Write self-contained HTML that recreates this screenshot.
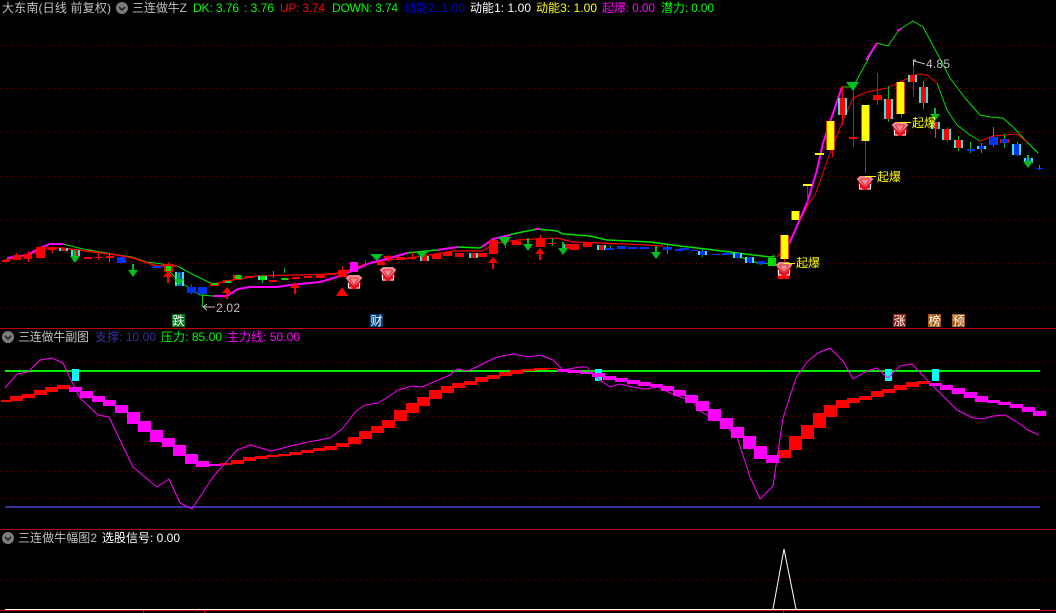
<!DOCTYPE html>
<html><head><meta charset="utf-8"><style>
html,body{margin:0;padding:0;background:#000;width:1056px;height:613px;overflow:hidden}
svg{display:block}
text{font-family:"Liberation Sans","WenQuanYi Zen Hei","Noto Sans CJK SC",sans-serif;font-size:12px}
.d{stroke:#780000;stroke-width:1;stroke-dasharray:1 5;fill:none;shape-rendering:crispEdges}
.c{shape-rendering:crispEdges}
.l{fill:none;stroke-linejoin:round}
</style></head><body>
<svg width="1056" height="613" viewBox="0 0 1056 613" xmlns="http://www.w3.org/2000/svg">
<defs>
<g id="ga"><path d="M-1 0h2v6h4l-5 7-5-7h4z" fill="#00c020"/></g>
<g id="ra"><path d="M-1 12h2v-6h4l-5-6-5 6h4z" fill="#f00"/></g>
<g id="gem">
<path d="M-6.500 -3H6.500V3Q6.500 6.500 3 7H-3Q-6.500 6.500 -6.500 3z" fill="#e8101c"/>
<path d="M-8.500 -4L-5 -7H5L8.500 -4L0 4z" fill="#f08a90"/>
<path d="M-5 -4L0 3L5 -4M-4 -4H4" fill="none" stroke="#d83040"/>
<path d="M-5.500 1V6H-2.500M5.500 1V6H2.500" fill="none" stroke="#fff"/>
</g>
<g id="ic"><circle r="6" fill="#7c7c7c"/><path d="M-3-1L0 2L3-1" fill="none" stroke="#222" stroke-width="1.6"/></g>
</defs>
<rect width="1056" height="613" fill="#000"/>

<!-- grid -->
<path class="d" d="M0 45.500H1056M0 88.500H1056M0 132.500H1056M0 176.500H1056M0 219.500H1056M0 263.500H1056M0 307.500H1056M0 362.500H1056M0 389.500H1056M0 416.500H1056M0 444.500H1056M0 471.500H1056M0 498.500H1056M0 579.500H1056"/>
<path class="c" d="M0 328.500H1056M0 529.500H1056" stroke="#b80000" fill="none"/>

<!-- main lines -->
<polyline class="l" stroke="#00e000" points="63,244 83,249 113,254 132,257 147,262 177,266 200,278 213,284"/>
<polyline class="l" stroke="#00e000" points="163,265 180,282 200,295 213,296"/>
<polyline class="l" stroke="#00e000" stroke-width="1.5" points="370,263 390,258 407,253 437,250 458,247 480,248 493,239 517,233 538,229 557,231 563,234 590,236 607,240 650,242 680,246 697,248 730,252 753,255 770,257 775,256"/>
<polyline class="l" stroke="#00e000" points="730,253 743,258 760,264 770,263"/>
<polyline class="l" stroke="#00e000" points="842,87 853,87 877,43 888,46 899,30 913,21 923,27 937,53 950,78 965,98 980,115 990,117 1003,118 1013,127 1027,142 1038,153"/>
<polyline class="l" stroke="#00e000" points="937,83 947,110 957,125 970,135 980,141"/>
<polyline class="l" stroke="#00e000" points="1027,142 1038,153"/>
<polyline class="l" stroke="#f00" stroke-width="1.5" points="2,261 17,257 33,253 43,248 62,248 117,255 133,258 157,266 177,266"/>
<polyline class="l" stroke="#f00" stroke-width="1.2" points="213,284 233,280 257,276 333,274 343,272 363,265 387,260 410,258 453,251 482,251 497,243 517,240 557,238 573,242 627,244 663,246"/>
<polyline class="l" stroke="#f00" points="777,257 790,240 808,205 815,195 830,153 842,123 853,98 867,92 888,88 900,82 918,74 927,75 937,83"/>
<polyline class="l" stroke="#f00" points="980,141 993,136 1017,134 1027,142"/>
<g class="l" stroke="#f0f" stroke-width="2">
<polyline class="l" points="7,258 27,255 40,248 50,244 63,244"/>
<polyline class="l" points="213,296 227,296 238,289 250,287 277,287 290,285 300,284 320,282 337,277 347,273 370,263 390,258 407,253"/>
<polyline class="l" points="437,250 458,247"/>
<polyline class="l" points="482,247 493,239 510,235"/>
<polyline class="l" points="535,229 540,229"/>
<polyline class="l" points="780,256 790,242 807,203 817,170 823,143 830,122 842,87"/>
<polyline class="l" points="866,60 877,43"/>
<polyline class="l" points="897,31 901,29"/>
</g>

<!-- wicks -->
<path class="c" fill="none" stroke="#f00" d="M16.500 253V260M28.500 251V262M52.500 246V253M98.500 252V260M168.500 262V268M342.500 266V272M365.500 260V268M377.500 258V266M388.500 255V262M412.500 252V260M505.500 240V248M540.500 235V240M832.500 150V157M842.500 86V125M853.500 90V147M865.500 141V173M877.500 73V105M901.500 114V118M913.500 60V97M947.500 127V142M807.500 185V205M784.500 259V262M191.500 284V294"/>
<path class="c" fill="none" stroke="#00c020" d="M109.500 254V262M262.500 275V283M273.500 271V278M284.500 268V273M888.500 86V122M923.500 81V109M935.500 129V138M958.500 136V151M970.500 142V153M981.500 143V153M993.500 127V147M1004.500 134V148M1017.500 142V156M1039.500 165V170M202.500 294V307M610.500 246V250M667.500 244V254M552.500 238V246M702.500 248V257"/>

<!-- cyan edge bodies -->
<path class="c" fill="#40e0e0" d="M59 248h9v3h-9zM71 250h9v6h-9zM175 272h9v14h-9zM258 276h9v4h-9zM420 256h9v5h-9zM469 253h9v5h-9zM563 244h9v5h-9zM597 245h9v5h-9zM698 251h9v4h-9zM838 98h9v17h-9zM884 99h9v20h-9zM908 75h9v7h-9zM919 87h9v16h-9zM931 122h9v7h-9zM942 129h9v11h-9zM954 140h9v8h-9zM977 146h9v3h-9zM1012 144h9v11h-9zM1024 158h9v5h-9zM733 253h9v5h-9zM745 257h9v6h-9z"/>
<!-- red bodies -->
<path class="c" fill="#f00" d="M2 260h8v2h-8zM13 255h8v5h-8zM24 254h8v5h-8zM36 247h9v11h-9zM48 248h8v2h-8zM61 248h5v3h-5zM73 250h5v6h-5zM84 257h8v2h-8zM94 257h8v1h-8zM106 256h8v2h-8zM164 264h9v8h-9zM210 283h9v3h-9zM223 280h9v3h-9zM233 275h9v5h-9zM245 276h8v2h-8zM269 280h8v2h-8zM281 278h8v2h-8zM292 277h8v2h-8zM304 276h8v2h-8zM316 275h9v3h-9zM328 273h8v2h-8zM338 270h9v7h-9zM377 262h8v3h-8zM396 257h9v3h-9zM408 257h8v2h-8zM422 256h5v5h-5zM432 254h9v5h-9zM443 252h9v4h-9zM455 253h9v4h-9zM471 253h5v5h-5zM478 253h9v4h-9zM489 240h9v14h-9zM512 241h9v4h-9zM536 238h9v9h-9zM548 243h8v1h-8zM565 244h5v5h-5zM570 244h9v6h-9zM583 243h9v4h-9zM599 245h5v5h-5zM840 98h5v17h-5zM849 137h8v2h-8zM873 95h9v5h-9zM886 99h5v20h-5zM910 75h5v7h-5zM921 87h5v16h-5zM933 122h5v7h-5zM944 129h5v11h-5zM956 140h5v8h-5z"/>
<!-- magenta body -->
<path class="c" fill="#f0f" d="M350 262h8v10h-8z"/>
<path class="c" fill="#f00" d="M384 256h8v2h-8zM778 275h11v4h-11z"/>
<!-- green bodies -->
<path class="c" fill="#00e000" d="M166 266h5v5h-5zM212 283h6v2h-6zM225 281h6v2h-6zM235 275h6v4h-6zM260 276h5v4h-5zM282 278h6v2h-6zM768 258h8v8h-8z"/>
<!-- blue bodies -->
<path class="c" fill="#03e" d="M117 257h9v6h-9zM152 266h9v2h-9zM177 272h5v14h-5zM187 287h9v6h-9zM198 287h9v7h-9zM605 248h9v2h-9zM617 246h9v3h-9zM628 247h9v2h-9zM640 247h9v2h-9zM663 247h9v3h-9zM675 249h8v2h-8zM680 248h9v2h-9zM690 250h8v1h-8zM700 251h5v4h-5zM712 254h8v1h-8zM722 253h9v2h-9zM735 253h5v5h-5zM747 257h5v6h-5zM757 261h8v3h-8zM967 149h8v2h-8zM979 146h5v3h-5zM1014 144h5v11h-5zM1026 158h5v5h-5zM1036 168h7v1h-7z"/>
<path class="c" fill="#03e" d="M989 137h9v8h-9zM1000 139h9v4h-9z"/>
<path class="c" fill="none" stroke="#f00" d="M989.500 137V145M997.500 137V145M1000.500 139V143M1008.500 139V143"/>
<!-- yellow bodies -->
<path class="c" fill="#e04000" d="M780 235h9v24h-9zM791 211h9v9h-9zM826 121h9v29h-9zM861 105h9v36h-9zM896 82h9v32h-9z"/>
<path class="c" fill="#ff0" d="M781 235h7v24h-7zM792 211h7v9h-7zM827 121h7v29h-7zM862 105h7v36h-7zM897 82h7v32h-7zM803 184h9v2h-9zM815 153h9v2h-9z"/>

<!-- arrows / triangles -->
<use href="#ga" x="75" y="250"/><use href="#ga" x="133" y="264"/><use href="#ga" x="179" y="273"/><use href="#ga" x="528" y="238"/><use href="#ga" x="563" y="242"/><use href="#ga" x="656" y="246"/><use href="#ga" x="935" y="108"/><use href="#ga" x="1028" y="155"/>
<use href="#ra" x="168" y="271"/><use href="#ra" x="227" y="287"/><use href="#ra" x="295" y="282"/><use href="#ra" x="493" y="257"/><use href="#ra" x="540" y="248"/>
<path fill="#f00" d="M342 287L336 296H348z"/>
<path fill="#00c020" d="M370 254H383L377 261zM416 252H428L422 258zM498 237H511L505 246zM846 82H859L853 91z"/>

<!-- gems -->
<use href="#gem" x="354" y="282"/><use href="#gem" x="388" y="274"/><use href="#gem" x="784" y="269"/><use href="#gem" x="865" y="183"/><use href="#gem" x="900" y="129"/>
<path stroke="#ff0" fill="none" class="c" d="M784 263.500H795M865 176.500H876M900 122.500H911"/>
<g fill="#ff0">
<text x="796" y="267" textLength="24">起爆</text>
<text x="877" y="181" textLength="24">起爆</text>
<text x="912" y="127" textLength="24">起爆</text>
</g>
<!-- value labels -->
<path d="M913.500 60V66M913 60H916M914 61L925 64M203 307H215M203 307L207 304M203 307L207 310" stroke="#c0c0c0" fill="none"/>
<text x="926" y="68" textLength="24" fill="#c0c0c0">4.85</text>
<text x="216" y="312" textLength="24" fill="#c0c0c0">2.02</text>

<!-- badges -->
<rect class="c" x="172" y="314" width="13" height="13" fill="#007a1c"/><text x="172.500" y="325" fill="#fff">跌</text>
<rect class="c" x="370" y="314" width="13" height="13" fill="#03437a"/><text x="370.500" y="325" fill="#fff">财</text>
<rect class="c" x="893" y="314" width="13" height="13" fill="#8a2010"/><text x="893.500" y="325" fill="#fff">涨</text>
<rect class="c" x="928" y="314" width="13" height="13" fill="#a85a10"/><text x="928.500" y="325" fill="#fff">榜</text>
<rect class="c" x="952" y="314" width="13" height="13" fill="#a85a10"/><text x="952.500" y="325" fill="#fff">预</text>

<!-- sub pane -->
<rect class="c" x="5" y="370" width="1035" height="2" fill="#00f000"/>
<rect class="c" x="5" y="506" width="1035" height="2" fill="#333399"/>
<path class="c" fill="#0ff" d="M72 369h7v12h-7zM595 369h7v12h-7zM885 369h7v12h-7zM932 369h7v12h-7z"/>
<path class="c" fill="#f00" d="M1 400H12V402H1zM10 396H23V401H10zM22 394H35V398H22zM34 390H47V395H34zM45 387H58V392H45zM57 385H70V389H57zM220 463H232V465H220zM231 460H244V464H231zM243 457H256V461H243zM255 456H268V459H255zM266 455H279V457H266zM278 454H291V456H278zM289 452H302V455H289zM301 450H314V453H301zM313 448H326V451H313zM324 446H337V450H324zM336 443H349V447H336zM348 437H361V444H348zM359 431H372V439H359zM371 426H384V433H371zM382 420H395V428H382zM394 410H407V421H394zM406 403H419V413H406zM417 397H430V406H417zM429 390H442V399H429zM441 386H454V393H441zM452 383H465V388H452zM464 381H477V385H464zM475 377H488V382H475zM487 375H500V379H487zM499 372H512V376H499zM510 370H523V374H510zM522 369H535V371H522zM534 368H547V370H534zM546 368H557V369H546zM778 450H791V458H778zM789 436H802V450H789zM801 425H814V439H801zM813 413H826V428H813zM824 405H837V417H824zM836 400H849V408H836zM847 398H860V403H847zM859 396H872V400H859zM871 391H884V397H871zM882 389H895V393H882zM894 385H907V390H894zM906 382H919V387H906zM917 381H930V384H917z"/>
<path class="c" fill="#f0f" d="M69 387H82V392H69zM80 391H93V398H80zM92 396H105V402H92zM103 400H116V406H103zM115 405H128V413H115zM127 412H140V424H127zM138 421H151V432H138zM150 430H163V442H150zM162 438H175V447H162zM173 445H186V456H173zM185 454H198V464H185zM196 461H209V467H196zM209 464H221V466H209zM557 369H570V372H557zM568 370H581V373H568zM580 372H593V374H580zM592 373H605V377H592zM603 376H616V380H603zM615 378H628V382H615zM627 380H640V384H627zM638 382H651V386H638zM650 384H663V387H650zM661 386H674V391H661zM673 390H686V396H673zM685 395H698V403H685zM696 401H709V411H696zM708 409H721V421H708zM720 418H733V429H720zM731 427H744V438H731zM743 436H756V449H743zM754 446H767V459H754zM766 455H779V463H766zM929 383H942V386H929zM940 385H953V390H940zM952 388H965V394H952zM964 392H977V398H964zM975 396H988V402H975zM987 400H1000V403H987zM998 402H1011V405H998zM1010 404H1023V408H1010zM1022 407H1035V412H1022zM1033 411H1046V416H1033z"/>
<polyline class="l" stroke="#f0f" points="5,388 17,374 28,372 40,360 52,358 63,363 72,382 80,398 98,415 109,417 120,440 133,467 157,487 169,479 180,503 192,509 213,477 237,450 250,445 271,451 303,443 330,438 342,429 350,419 355,412 365,405 378,403 388,397 398,390 412,386 422,387 450,375 457,369 468,371 497,357 513,354 528,357 540,355 553,360 563,370 580,367 587,367 593,375 610,387 620,384 633,387 645,389 658,387 675,395 693,402 700,411 710,417 720,420 737,437 750,477 760,499 773,486 783,418 796,378 807,362 818,353 830,348 843,361 853,379 867,371 877,368 888,378 900,366 912,364 930,383 957,410 973,418 983,419 993,416 1005,415 1017,422 1028,430 1039,435"/>

<!-- bottom pane -->
<polyline fill="none" stroke="#fff" points="773,609 784,549 796,609"/>
<path class="c" fill="none" stroke="#fff" d="M5 609.500H1040"/>
<path class="c" fill="none" stroke="#e00000" d="M0 610.500H1056M143.500 610V613M204.500 610V613M783.500 610V613"/>

<!-- headers -->
<text x="2" y="12" textLength="109" fill="#c0c0c0">大东南(日线 前复权)</text>
<use href="#ic" x="122" y="8"/>
<text x="132" y="12" textLength="55" fill="#c0c0c0">三连做牛Z</text>
<text x="193" y="12" textLength="46" fill="#0f0">DK: 3.76</text>
<text x="244" y="12" textLength="30" fill="#0f0">: 3.76</text>
<text x="280" y="12" textLength="45" fill="#f00">UP: 3.74</text>
<text x="332" y="12" textLength="66" fill="#0f0">DOWN: 3.74</text>
<text x="404" y="12" textLength="61" fill="#0000e8">动能2: 1.00</text>
<text x="470" y="12" textLength="61" fill="#fff">动能1: 1.00</text>
<text x="536" y="12" textLength="61" fill="#ff0">动能3: 1.00</text>
<text x="602" y="12" textLength="53" fill="#f0f">起爆: 0.00</text>
<text x="661" y="12" textLength="53" fill="#0f0">潜力: 0.00</text>

<use href="#ic" x="8" y="337"/>
<text x="18" y="341" textLength="71" fill="#c0c0c0">三连做牛副图</text>
<text x="95" y="341" textLength="61" fill="#333399">支撑: 10.00</text>
<text x="161" y="341" textLength="61" fill="#0f0">压力: 85.00</text>
<text x="227" y="341" textLength="73" fill="#f0f">主力线: 50.00</text>

<use href="#ic" x="8" y="538"/>
<text x="18" y="542" textLength="79" fill="#c0c0c0">三连做牛幅图2</text>
<text x="102" y="542" textLength="78" fill="#fff">选股信号: 0.00</text>
</svg>
</body></html>
